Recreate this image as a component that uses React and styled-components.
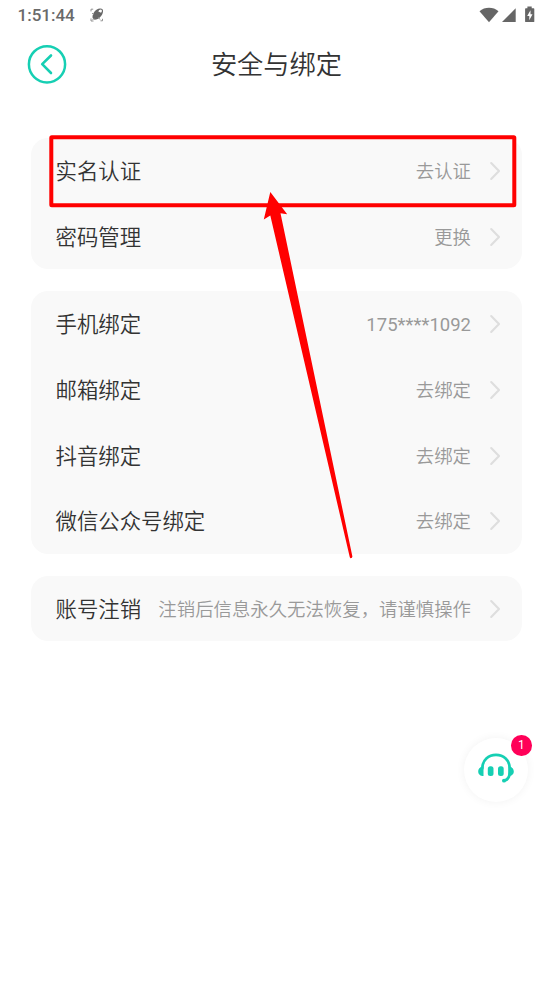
import React from "react";
import styled, { createGlobalStyle } from "styled-components";

const GlobalStyle = createGlobalStyle`
  * { box-sizing: border-box; }
  body {
    margin: 0;
    background: #fff;
    font-family: Roboto, "Noto Sans CJK SC", sans-serif;
  }
`;

const Screen = styled.div`
  position: relative;
  width: 553px;
  height: 984px;
  overflow: hidden;
  background: #fff;
`;

const StatusBar = styled.div`
  display: flex;
  align-items: center;
  height: 30px;
  padding: 0 17px 0 17.5px;
  color: #6a6a6a;
`;

const Clock = styled.span`
  font-size: 17px;
  font-weight: 500;
  line-height: 30px;
  margin-right: 15px;
`;

const StatusIcons = styled.div`
  display: flex;
  margin-left: auto;
`;

const Header = styled.header`
  display: grid;
  grid-template-columns: 40px 1fr 40px;
  align-items: center;
  height: 68px;
  padding: 0 27px;
`;

const BackButton = styled.button`
  display: flex;
  width: 40px;
  height: 40px;
  padding: 0;
  border: 0;
  background: none;
`;

const Title = styled.h1`
  margin: 0;
  padding-top: 2px;
  text-align: center;
  font-size: 26.25px;
  line-height: 38px;
  font-weight: 350;
  color: #333;
`;

const Groups = styled.main`
  display: flex;
  flex-direction: column;
  gap: 22px;
  padding: 40px 31px 0;
`;

const Card = styled.section`
  border-radius: 17px;
  background: #f9f9f9;
`;

const Row = styled.div`
  display: flex;
  align-items: center;
  height: 65.65px;
  padding: 0.5px 20px 0 24.5px;
  white-space: nowrap;
`;

const Label = styled.span`
  padding-top: 2px;
  font-size: 21.4px;
  line-height: 32px;
  font-weight: 350;
  color: #333;
`;

const Value = styled.span`
  margin-left: auto;
  margin-right: 17px;
  padding-top: ${(p) => (p.$numeric ? "1px" : "2px")};
  font-size: ${(p) => (p.$numeric ? "18.5px" : "18.4px")};
  line-height: 28px;
  font-weight: ${(p) => (p.$numeric ? 400 : 350)};
  color: #999;
`;

const SupportButton = styled.div`
  position: absolute;
  left: 464px;
  top: 738px;
  width: 64px;
  height: 64px;
  border-radius: 50%;
  background: #fff;
  box-shadow: 0 0 10px rgba(0, 0, 0, 0.055);
`;

const Badge = styled.span`
  position: absolute;
  left: 47px;
  top: -3px;
  width: 20.6px;
  height: 20.6px;
  border-radius: 50%;
  background: #ff0058;
  color: #fff;
  font-size: 12px;
  line-height: 20px;
  text-align: center;
`;

const Annotation = styled.svg`
  position: absolute;
  left: 0;
  top: 0;
  pointer-events: none;
`;

const groups = [
  [["实名认证", "去认证"], ["密码管理", "更换"]],
  [
    ["手机绑定", "175****1092"],
    ["邮箱绑定", "去绑定"],
    ["抖音绑定", "去绑定"],
    ["微信公众号绑定", "去绑定"],
  ],
  [["账号注销", "注销后信息永久无法恢复，请谨慎操作"]],
];

const Chevron = () => (
  <svg width="14" height="20" viewBox="0 0 14 20" fill="none">
    <path d="M3.2 2 11 10 3.2 18" stroke="#dedede" strokeWidth="2.1" strokeLinecap="round" strokeLinejoin="round" />
  </svg>
);

const SatelliteIcon = () => (
  <svg width="14" height="14" viewBox="0 0 14 14" fill="none">
    <path d="M2.6 10C2 6 5.5 1 10 .6c2.3-.1 3.2 1 3 2.9C12.7 7.8 8.5 12 4 11.6Z" fill="#666" />
    <path d="M8.300 3.600c.5-1.400 1.900-2.300 3-1.900.9.4.8 1.900-.2 3Z" fill="#fff" />
    <path d="M1 3.400V1.200h2.200M1 10.500V13h2.500M10.500 12.800h2v-2M2.300 12.200l2-2M2 5l2 2M8 9l2 2.500" stroke="#888" strokeWidth=".9" />
  </svg>
);

const SystemIcons = () => (
  <svg width="58" height="20" viewBox="478.500 5 58 20" fill="#666">
    <path d="M480 11.200C485.300 6.600 493.700 6.600 499 11.200L489.500 22.200Z" />
    <path d="M516.200 8.300V22H502.500Z" />
    <path d="M526.200 8.300h1.700V6.500h4.300v1.800h2c.3 0 .6.300.6.600v12.500c0 .3-.3.600-.6.600h-8c-.3 0-.6-.3-.6-.6V8.900c0-.3.3-.6.6-.6Z" />
    <path d="M531 10.200 527.700 15.900h2.100v4.300l3.200-5.900h-2Z" fill="#fff" />
  </svg>
);

export default function App() {
  return (
    <>
      <GlobalStyle />
      <Screen>
        <StatusBar>
          <Clock>1:51:44</Clock>
          <SatelliteIcon />
          <StatusIcons><SystemIcons /></StatusIcons>
        </StatusBar>
        <Header>
          <BackButton aria-label="返回">
            <svg width="40" height="40" viewBox="0 0 40 40" fill="none" stroke="#16cfb3" strokeLinecap="round" strokeLinejoin="round">
              <circle cx="20" cy="20.3" r="18.1" strokeWidth="2.5" />
              <path d="M24 11.500 15.200 20.200 24 29" strokeWidth="2.600" />
            </svg>
          </BackButton>
          <Title>安全与绑定</Title>
        </Header>
        <Groups>
          {groups.map((rows) => (
            <Card key={rows[0][0]}>
              {rows.map(([label, value]) => (
                <Row key={label}>
                  <Label>{label}</Label>
                  <Value $numeric={/^\d/.test(value)}>{value}</Value>
                  <Chevron />
                </Row>
              ))}
            </Card>
          ))}
        </Groups>
        <SupportButton>
          <svg width="64" height="64" viewBox="464 738 64 64" fill="none">
            <path d="M482.300 768.500C482.300 760 488.500 754.800 496 754.800S509.700 760 509.700 768.500V772C509.700 777.500 507.500 780 503.800 780.700" stroke="#16cfb3" strokeWidth="2.700" strokeLinecap="round" />
            <path d="M483.500 766.500V776c-3 0-5.300-1.800-5.300-4.600s2.300-4.900 5.300-4.900ZM508.500 766.500V776c3 0 5.300-1.800 5.300-4.600s-2.300-4.900-5.300-4.900Z" fill="#16cfb3" />
            <rect x="487.800" y="766.300" width="5.700" height="9.800" rx="2.500" fill="#16cfb3" />
            <rect x="498" y="766.300" width="5.700" height="9.800" rx="2.500" fill="#16cfb3" />
            <circle cx="504" cy="780.700" r="1.900" fill="#16cfb3" />
          </svg>
          <Badge>1</Badge>
        </SupportButton>
        <Annotation width="553" height="984" viewBox="0 0 553 984">
          <rect x="51.300" y="137.200" width="463" height="68" rx=".5" fill="none" stroke="#f00" strokeWidth="4" strokeLinejoin="round" />
          <path d="M270.300 192 287.200 214.300 280.500 213.300 352.400 556.500Q352.300 558.300 350.500 558.200L349.800 557.300 270.300 215.500 263.800 219.500Z" fill="#f00" />
        </Annotation>
      </Screen>
    </>
  );
}
